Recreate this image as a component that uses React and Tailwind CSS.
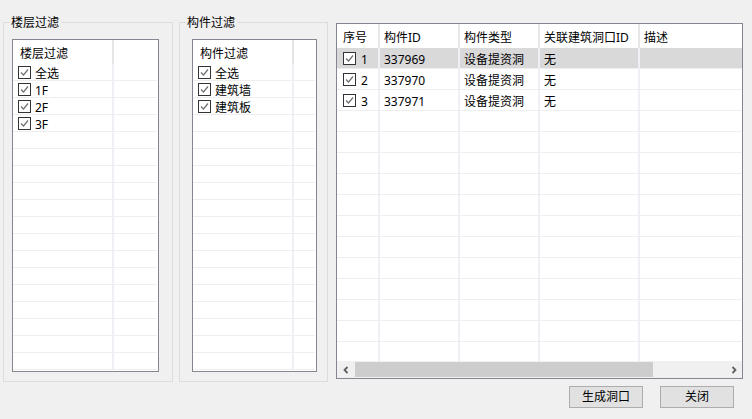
import React from "react";

const font = { fontFamily: '"Noto Sans", "Noto Sans CJK SC", sans-serif' };

function CheckBox() {
  return (
    <svg width="13" height="13" viewBox="0 0 13 13" className="shrink-0">
      <rect x="0.5" y="0.5" width="12" height="12" fill="#fff" stroke="#333" />
      <polyline
        points="3,6.5 5.5,9 10,3.5"
        fill="none"
        stroke="#707070"
        strokeWidth="1.2"
      />
    </svg>
  );
}

function FilterList({ title, items, width, splitAt }) {
  const rows = [];
  for (let i = 0; i < 18; i++) rows.push(items[i]);
  return (
    <div
      className="h-[333px] border border-[#828790] bg-white overflow-hidden"
      style={{ width }}
    >
      <div className="flex h-[24px]">
        <div
          className="flex items-center pl-[7px] pt-[4px] text-[12px] text-black border-r-2 border-[#e5e5e5] shrink-0"
          style={{ width: splitAt }}
        >
          {title}
        </div>
        <div className="flex-1"></div>
      </div>
      {rows.map((item, i) => (
        <div key={i} className="flex h-[17px]">
          <div
            className="flex items-center gap-[4px] pl-[5px] pt-[1px] text-[12px] text-black border-b border-r-2 border-b-[#eeeeee] border-r-[#eef0f5] shrink-0"
            style={{ width: splitAt }}
          >
            {item && <CheckBox />}
            {item && <span className="leading-[16px] pt-[2px]">{item}</span>}
          </div>
          <div className="flex-1 border-b border-[#eeeeee] mr-[1px]"></div>
        </div>
      ))}
    </div>
  );
}

function GroupBox({ title, width, padLeft, children }) {
  return (
    <div
      className="relative h-[360px] border border-[#dcdcdc] pt-[16px] shrink-0"
      style={{ width, paddingLeft: padLeft }}
    >
      <span className="absolute -top-[8px] left-[5px] bg-[#f0f0f0] px-[2px] text-[12px] leading-[16px] text-black">
        {title}
      </span>
      {children}
    </div>
  );
}

const cols = [
  { label: "序号", w: "w-[43px]", pl: "pl-[6px]" },
  { label: "构件ID", w: "w-[80px]", pl: "pl-[4px]" },
  { label: "构件类型", w: "w-[80px]", pl: "pl-[4px]" },
  { label: "关联建筑洞口ID", w: "w-[100px]", pl: "pl-[4px]" },
  { label: "描述", w: "flex-1", pl: "pl-[4px]" },
];

const data = [
  ["1", "337969", "设备提资洞", "无", ""],
  ["2", "337970", "设备提资洞", "无", ""],
  ["3", "337971", "设备提资洞", "无", ""],
];

function DataTable() {
  const rows = [];
  for (let i = 0; i < 15; i++) rows.push(data[i]);
  return (
    <div className="w-[407px] h-[356px] mt-[1px] border border-[#828790] bg-white flex flex-col">
      <div className="h-[337px] overflow-hidden">
        <div className="flex h-[24px]">
          {cols.map((c, i) => (
            <div
              key={i}
              className={`${c.w} ${c.pl} flex items-center pt-[3px] text-[12px] text-black shrink-0 ${
                i < 4 ? "border-r-2 border-[#e8e8e8]" : ""
              }`}
            >
              {c.label}
            </div>
          ))}
        </div>
        {rows.map((r, ri) => (
          <div
            key={ri}
            className={`flex h-[21px] border-b border-[#eeeeee] ${
              ri === 0 ? "bg-[#d9d9d9]" : ""
            }`}
          >
            {cols.map((c, i) => (
              <div
                key={i}
                className={`${c.w} ${c.pl} flex items-center gap-[5px] pt-[1px] text-[12px] text-black shrink-0 ${
                  i < 4 ? "border-r-2 border-[#eef0f5]" : ""
                }`}
              >
                {r && i === 0 && <CheckBox />}
                {r && <span className="pt-[2px]">{r[i]}</span>}
              </div>
            ))}
          </div>
        ))}
      </div>
      <div className="flex h-[17px] bg-[#f0f0f0] items-center">
        <div className="w-[17px] h-[17px] flex items-center justify-center">
          <svg width="8" height="8" viewBox="0 0 8 8">
            <polyline points="5.5,1 2.5,4 5.5,7" fill="none" stroke="#606060" strokeWidth="1.8" />
          </svg>
        </div>
        <div className="w-[298px] h-[15px] bg-[#cdcdcd] ml-[1px]"></div>
        <div className="flex-1"></div>
        <div className="w-[17px] h-[17px] flex items-center justify-center">
          <svg width="8" height="8" viewBox="0 0 8 8">
            <polyline points="2.5,1 5.5,4 2.5,7" fill="none" stroke="#606060" strokeWidth="1.8" />
          </svg>
        </div>
      </div>
    </div>
  );
}

export default function App() {
  return (
    <div className="w-[752px] h-[419px] bg-[#f0f0f0] flex flex-col overflow-hidden" style={font}>
      <div className="flex items-start pl-[3px] pt-[22px]">
        <GroupBox title="楼层过滤" width="170px" padLeft="8px">
          <FilterList title="楼层过滤" items={["全选", "1F", "2F", "3F"]} width="147px" splitAt="101px" />
        </GroupBox>
        <div className="ml-[6px]">
          <GroupBox title="构件过滤" width="149px" padLeft="12px">
            <FilterList title="构件过滤" items={["全选", "建筑墙", "建筑板"]} width="125px" splitAt="101px" />
          </GroupBox>
        </div>
        <div className="ml-[8px]">
          <DataTable />
        </div>
      </div>
      <div className="flex justify-end gap-[17px] pr-[18px] mt-[4px]">
        <button className="w-[74px] h-[22px] bg-[#e1e1e1] border border-[#adadad] text-[12px] text-black flex items-center justify-center">
          生成洞口
        </button>
        <button className="w-[74px] h-[22px] bg-[#e1e1e1] border border-[#adadad] text-[12px] text-black flex items-center justify-center">
          关闭
        </button>
      </div>
    </div>
  );
}
